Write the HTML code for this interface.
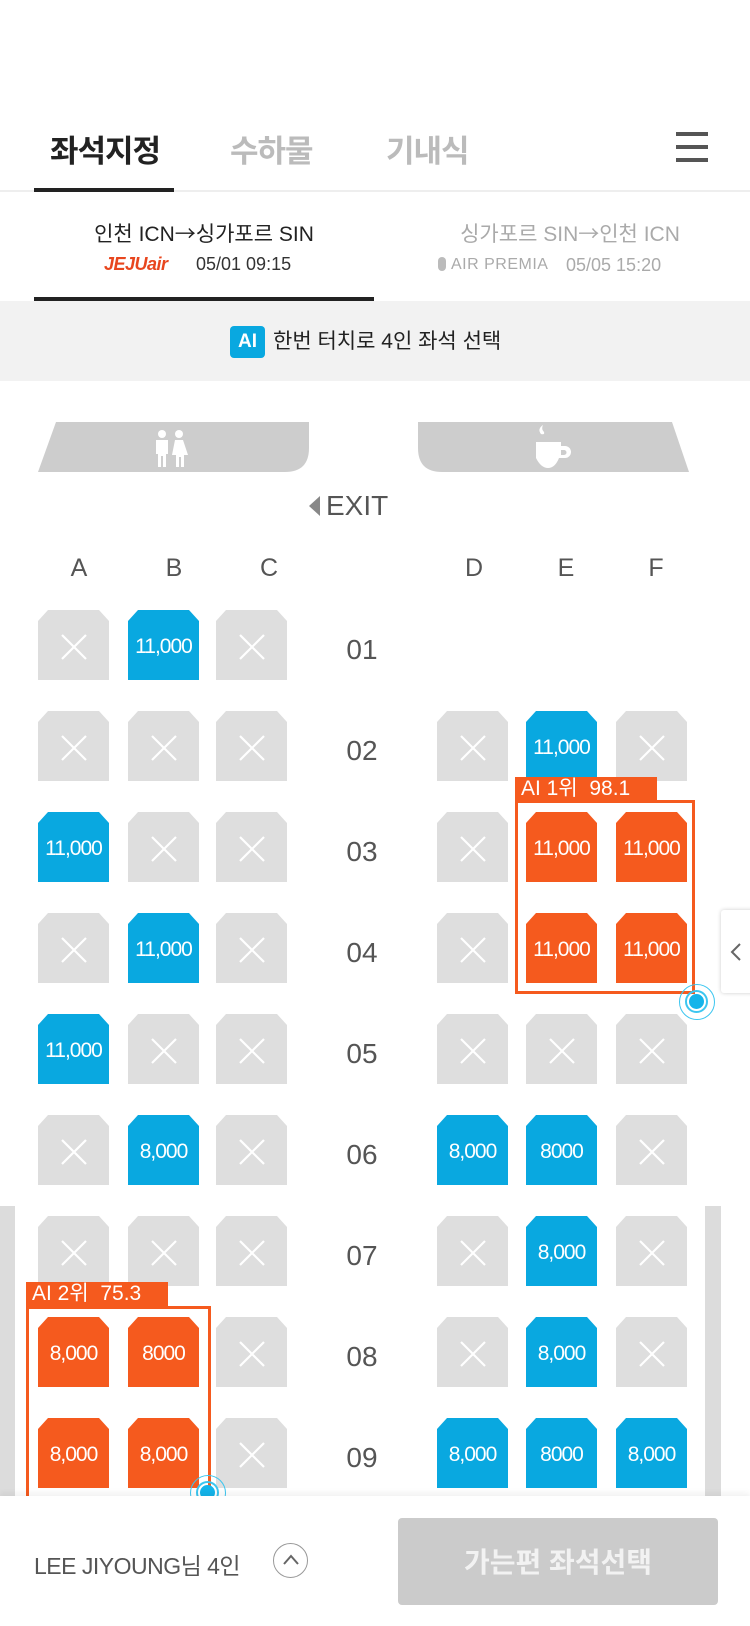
<!DOCTYPE html>
<html><head><meta charset="utf-8"><style>
*{margin:0;padding:0;box-sizing:border-box}
body{width:750px;height:1626px;background:#fff;position:relative;overflow:hidden;font-family:"Liberation Sans","Noto Sans CJK KR",sans-serif}
.a{position:absolute}
.tab{position:absolute;top:126px;font-size:31px;font-weight:bold;color:#bbb;letter-spacing:-1px}
.seat{position:absolute;width:71px;height:70px;clip-path:polygon(10px 0,61px 0,71px 11px,71px 70px,0 70px,0 11px);color:#fff;font-size:21px;letter-spacing:-1px;display:flex;align-items:center;justify-content:center;padding-top:3px}
.g{background:#dedede}.b{background:#09a8e0}.o{background:#f55a1e}
.rn{position:absolute;left:322px;width:80px;text-align:center;font-size:28px;color:#555}
.col{position:absolute;top:554px;font-size:25px;color:#555;width:30px;text-align:center}
.box{position:absolute;border:3px solid #f55a1e}
.lbl{position:absolute;background:#f55a1e;color:#fff;font-size:21px;padding:0 6px;line-height:24px;white-space:pre}
.dot{position:absolute;width:36px;height:36px;border-radius:50%;border:1.5px solid #3cc6f0}
.dot::before{content:"";position:absolute;left:5px;top:5px;width:23px;height:23px;border-radius:50%;border:2px solid #3cc6f0;box-sizing:border-box}
.dot::after{content:"";position:absolute;left:9px;top:9px;width:15px;height:15px;border-radius:50%;background:#14b4ea}
</style></head><body>

<div class="tab" style="left:50px;color:#222">좌석지정</div>
<div class="tab" style="left:230px">수하물</div>
<div class="tab" style="left:386px">기내식</div>
<div class="a" style="left:676px;top:132px;width:32px;height:4px;background:#555"></div>
<div class="a" style="left:676px;top:145px;width:32px;height:4px;background:#555"></div>
<div class="a" style="left:676px;top:158px;width:32px;height:4px;background:#555"></div>
<div class="a" style="left:0;top:190px;width:750px;height:2px;background:#eee"></div>
<div class="a" style="left:34px;top:188px;width:140px;height:4px;background:#222"></div>

<div class="a" style="left:34px;top:218px;width:340px;text-align:center;font-size:21px;color:#222">인천 ICN<span style="font-family:'Noto Sans CJK KR',sans-serif">→</span>싱가포르 SIN</div>
<div class="a" style="left:104px;top:254px;font-size:18px;font-style:italic;font-weight:bold;color:#e8461e;letter-spacing:-0.5px">JEJUair</div>
<div class="a" style="left:196px;top:254px;font-size:18px;color:#333">05/01 09:15</div>
<div class="a" style="left:420px;top:218px;width:300px;text-align:center;font-size:21px;color:#aaa">싱가포르 SIN<span style="font-family:'Noto Sans CJK KR',sans-serif">→</span>인천 ICN</div>
<div class="a" style="left:438px;top:257px;width:8px;height:14px;border-radius:4px;background:#bbb"></div>
<div class="a" style="left:451px;top:256px;font-size:16px;color:#aaa;letter-spacing:0.5px">AIR PREMIA</div>
<div class="a" style="left:566px;top:255px;font-size:18px;color:#aaa">05/05 15:20</div>
<div class="a" style="left:34px;top:297px;width:340px;height:4px;background:#222"></div>

<div class="a" style="left:0;top:301px;width:750px;height:80px;background:#f2f2f2"></div>
<div class="a" style="left:230px;top:326px;width:35px;height:32px;border-radius:4px;background:#09a8e0;color:#fff;font-size:19px;font-weight:bold;text-align:center;line-height:32px">AI</div>
<div class="a" style="left:273px;top:326px;font-size:21px;color:#222;line-height:32px">한번 터치로 4인 좌석 선택</div>

<svg class="a" style="left:0;top:420px" width="750" height="56">
<path d="M56 2 L309 2 L309 28 Q309 52 285 52 L38 52 Z" fill="#cdcdcd"/>
<path d="M418 2 L672 2 L689 52 L442 52 Q418 52 418 28 Z" fill="#cdcdcd"/>
<g fill="#fff"><circle cx="162" cy="14" r="4"/><path d="M156 20h12v14h-2v13h-3v-11h-2v11h-3v-13h-2z"/>
<circle cx="179" cy="14" r="4"/><path d="M175 20h8l5 15h-4v12h-3v-10h-2v10h-3v-12h-4z"/>
<path d="M541 14q-4-5 2-9q-2 4 1 7q1 3-3 2z"/><path d="M536 22h25v4h4a6 6 0 0 1 0 12h-6q-4 10-11 10t-12-10zm25 8v5h3a2.5 2.5 0 0 0 0-5z"/></g>
</svg>
<svg class="a" style="left:308px;top:496px" width="14" height="20"><path d="M12 0 L1 10 L12 20 Z" fill="#888"/></svg>
<div class="a" style="left:326px;top:490px;font-size:28px;color:#555">EXIT</div>

<div class="col" style="left:64px">A</div><div class="col" style="left:159px">B</div><div class="col" style="left:254px">C</div>
<div class="col" style="left:459px">D</div><div class="col" style="left:551px">E</div><div class="col" style="left:641px">F</div>

<div class="a" style="left:0;top:1206px;width:15px;height:290px;background:#dcdcdc"></div>
<div class="a" style="left:705px;top:1206px;width:16px;height:290px;background:#dcdcdc"></div>

<div id="seats"></div>
<script>
const xs=[38,128,216,437,526,616],ys=[610,711,812,913,1014,1115,1216,1317,1418];
const d=[
["x","b11,000","x","","",""],
["x","x","x","x","b11,000","x"],
["b11,000","x","x","x","o11,000","o11,000"],
["x","b11,000","x","x","o11,000","o11,000"],
["b11,000","x","x","x","x","x"],
["x","b8,000","x","b8,000","b8000","x"],
["x","x","x","x","b8,000","x"],
["o8,000","o8000","x","x","b8,000","x"],
["o8,000","o8,000","x","b8,000","b8000","b8,000"]];
let h="";
const X='<svg width="28" height="28"><path d="M2 2L26 26M26 2L2 26" stroke="#fff" stroke-width="2.2"/></svg>';
d.forEach((r,i)=>{h+=`<div class="rn" style="top:${ys[i]+24}px">0${i+1}</div>`;
r.forEach((s,j)=>{if(!s)return;if(s=="x")h+=`<div class="seat g" style="left:${xs[j]}px;top:${ys[i]}px">${X}</div>`;
else h+=`<div class="seat ${s[0]}" style="left:${xs[j]}px;top:${ys[i]}px">${s.slice(1)}</div>`;});});
document.getElementById("seats").innerHTML=h;
</script>

<div class="box" style="left:515px;top:800px;width:180px;height:194px"></div>
<div class="lbl" style="left:515px;top:777px;width:142px">AI 1위  98.1</div>
<div class="box" style="left:26px;top:1306px;width:185px;height:200px"></div>
<div class="lbl" style="left:26px;top:1282px;width:142px">AI 2위  75.3</div>
<div class="dot" style="left:679px;top:984px"></div>
<div class="dot" style="left:190px;top:1475px"></div>

<div class="a" style="left:721px;top:910px;width:40px;height:83px;background:#fff;box-shadow:0 0 4px rgba(0,0,0,.2);border-radius:3px 0 0 3px"></div>
<svg class="a" style="left:729px;top:942px" width="14" height="20"><path d="M11 2 L3 10 L11 18" stroke="#666" stroke-width="2" fill="none"/></svg>

<div class="a" style="left:0;top:1496px;width:750px;height:130px;background:#fff;box-shadow:0 -3px 6px rgba(0,0,0,.06)"></div>
<div class="a" style="left:34px;top:1547px;font-size:23px;color:#555;letter-spacing:-0.5px">LEE JIYOUNG님 4인</div>
<div class="a" style="left:273px;top:1543px;width:35px;height:35px;border-radius:50%;border:1.5px solid #999"></div>
<svg class="a" style="left:281px;top:1551px" width="20" height="18"><path d="M3 13 L10 5 L17 13" stroke="#666" stroke-width="2" fill="none"/></svg>
<div class="a" style="left:398px;top:1518px;width:320px;height:87px;border-radius:4px;background:#cbcbcb;color:#f2f2f2;font-size:28px;font-weight:bold;text-align:center;line-height:90px">가는편 좌석선택</div>
</body></html>
